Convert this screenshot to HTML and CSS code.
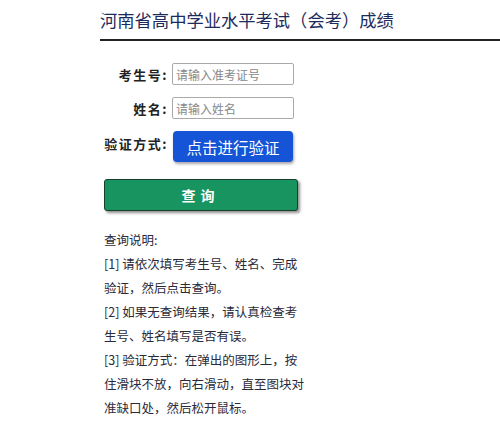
FILE: index.html
```html
<!DOCTYPE html>
<html lang="zh">
<head>
<meta charset="utf-8">
<link rel="stylesheet" href="styles.css">
</head>
<body>
<div class="page">
  <h1 class="title">河南省高中学业水平考试（会考）成绩</h1>
  <div class="form">
    <div class="row">
      <label class="label">考生号:</label>
      <input class="input" type="text" placeholder="请输入准考证号">
    </div>
    <div class="row">
      <label class="label">姓名:</label>
      <input class="input" type="text" placeholder="请输入姓名">
    </div>
    <div class="row row-verify">
      <label class="label">验证方式:</label>
      <button class="btn-verify" type="button">点击进行验证</button>
    </div>
    <button class="btn-query" type="button">查 询</button>
    <div class="notes">
      <p>查询说明:</p>
      <p>[1] 请依次填写考生号、姓名、完成验证，然后点击查询。</p>
      <p>[2] 如果无查询结果，请认真检查考生号、姓名填写是否有误。</p>
      <p>[3] 验证方式：在弹出的图形上，按住滑块不放，向右滑动，直至图块对准缺口处，然后松开鼠标。</p>
    </div>
  </div>
</div>
</body>
</html>
```
FILE: styles.css
```css
* { box-sizing: border-box; }
body {
  margin: 0;
  background: #fff;
  font-family: "Microsoft YaHei", "Noto Sans CJK SC", sans-serif;
}
.page {
  margin-left: 100px;
  width: 400px;
}
.title {
  margin: 0;
  padding-top: 9px;
  height: 41px;
  font-size: 17.3px;
  font-weight: normal;
  line-height: 22px;
  color: #1d2b5c;
  border-bottom: 2px solid #222;
}
.form {
  width: 204px;
  padding-left: 4px;
  padding-top: 22px;
}
.row {
  display: flex;
  align-items: center;
  height: 22px;
  margin-bottom: 12px;
}
.label {
  width: 68px;
  text-align: right;
  font-size: 13px;
  font-weight: bold;
  letter-spacing: 1.5px;
  color: #222;
  padding-right: 4px;
}
.input {
  width: 122px;
  height: 22px;
  border: 1px solid #aaa;
  border-radius: 2px;
  padding: 0 3px;
  font-size: 12px;
  font-family: "Microsoft YaHei", "Noto Sans CJK SC", sans-serif;
  color: #333;
}
.input::placeholder { color: #888; }
.row-verify {
  height: 31px;
  margin-bottom: 17px;
  align-items: flex-start;
}
.row-verify .label {
  margin-top: 3px;
}
.btn-verify {
  margin-left: 1px;
  width: 120px;
  height: 31px;
  background: #1554d6;
  color: #fff;
  border: none;
  border-radius: 4px;
  font-size: 15.5px;
  font-family: "Microsoft YaHei", "Noto Sans CJK SC", sans-serif;
  box-shadow: 1px 2px 3px rgba(0,0,0,0.35);
}
.btn-query {
  display: block;
  width: 194px;
  height: 32px;
  background: #17945f;
  color: #fff;
  border: 1px solid #17402c;
  border-radius: 3px;
  font-size: 14px;
  font-weight: bold;
  letter-spacing: 1px;
  padding-left: 1px;
  font-family: "Microsoft YaHei", "Noto Sans CJK SC", sans-serif;
  box-shadow: 2px 2px 3px rgba(0,0,0,0.45);
}
.notes {
  margin-top: 17px;
  width: 200px;
  font-size: 12.5px;
  line-height: 24px;
  color: #2a2a3a;
}
.notes p { margin: 0; }
```
